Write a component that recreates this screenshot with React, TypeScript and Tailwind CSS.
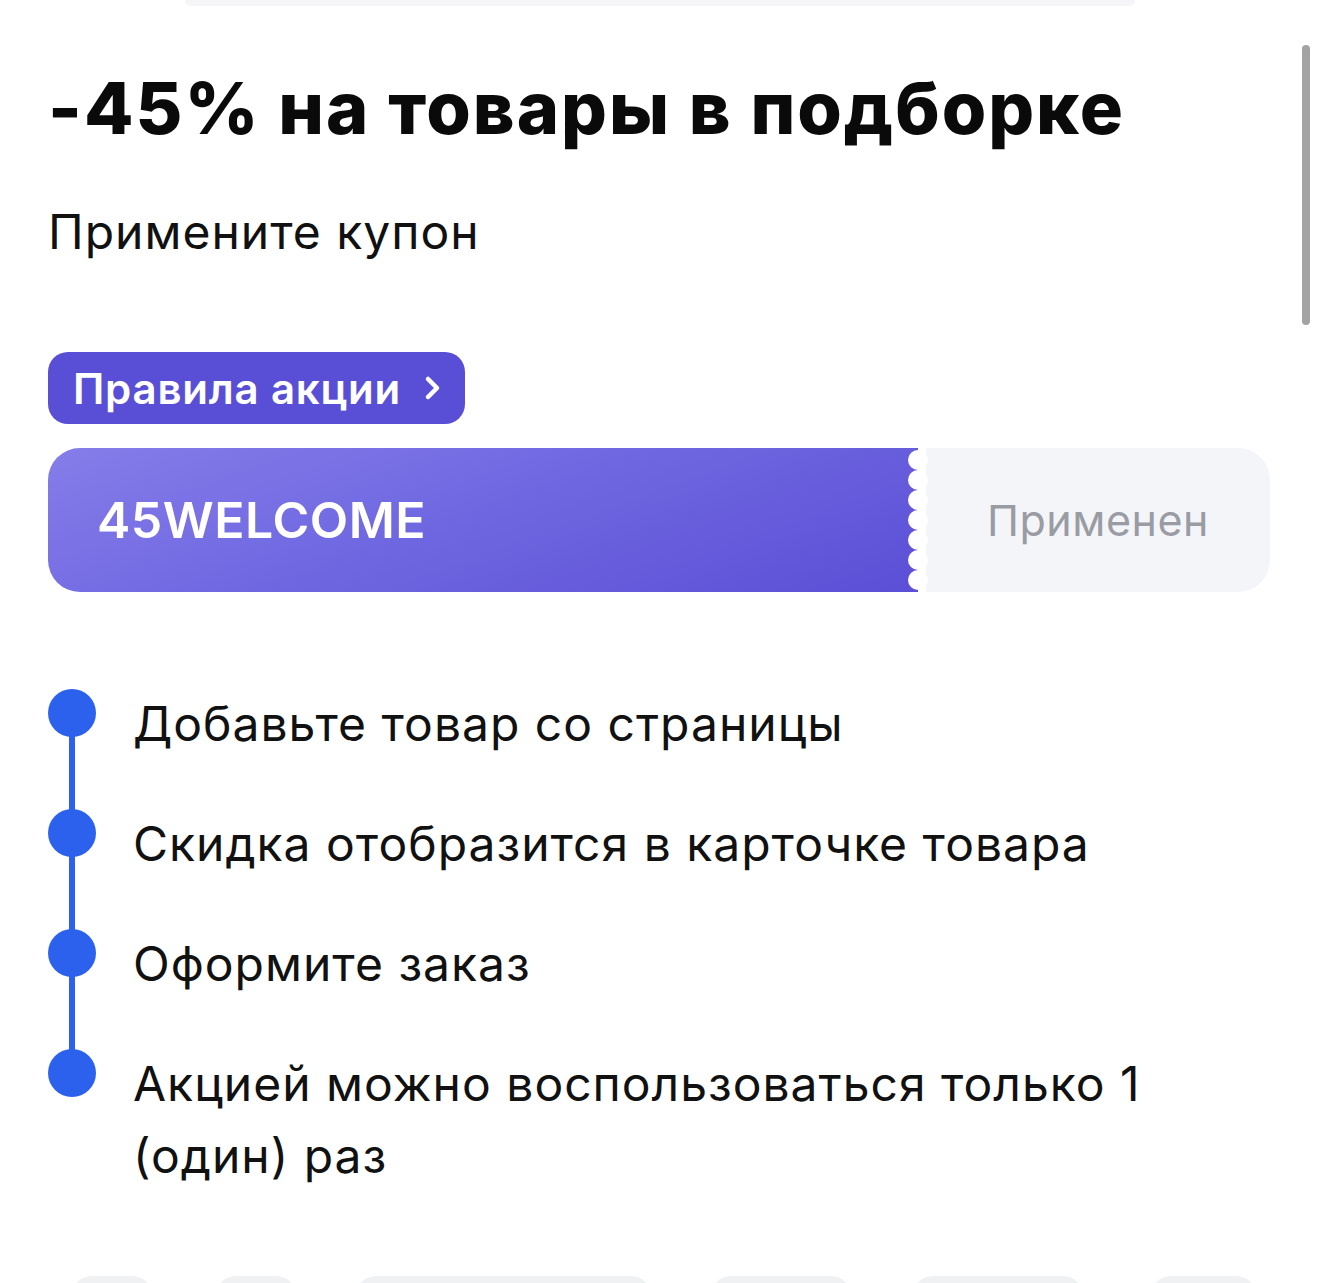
import React from "react"

const steps = [
  "Добавьте товар со страницы",
  "Скидка отобразится в карточке товара",
  "Оформите заказ",
  "Акцией можно воспользоваться только 1 (один) раз",
]

function Chevron() {
  return (
    <svg width="22" height="30" viewBox="0 0 22 30" fill="none">
      <path d="M7 6l9 9-9 9" stroke="white" strokeWidth="4.5" strokeLinecap="round" strokeLinejoin="round" />
    </svg>
  )
}

export default function App() {
  return (
    <div className="relative w-[1320px] h-[1283px] overflow-hidden bg-white font-['Inter',sans-serif] text-[#111]">
      {/* top card edge */}
      <div className="ml-[185px] w-[950px] h-[6px] rounded-b-[20px] bg-[#f5f5f8]" />

      {/* scrollbar */}
      <div className="absolute right-[10px] top-[45px] w-[8px] h-[280px] rounded-full bg-[#a3a3a3]" />

      <div className="px-12">
        <h1 className="mt-[60px] text-[72px] leading-[84px] font-extrabold tracking-[2px] text-[#0a0a0a]">
          -45% на товары в подборке
        </h1>
        <p className="mt-[52px] text-[48px] leading-[60px] tracking-[1px] text-[#111]">Примените купон</p>

        <button className="mt-[90px] h-[72px] pl-[25px] pr-[22px] rounded-[20px] bg-[#594fd6] flex items-center gap-[20px] text-white text-[42px] font-semibold tracking-[0.8px]">
          <span>Правила акции</span>
          <Chevron />
        </button>

        {/* coupon */}
        <div className="mt-[24px] flex h-[144px] w-[1222px]">
          <div className="relative w-[870px] h-full rounded-l-[32px] bg-[linear-gradient(160deg,#857de9_0%,#6e66e0_50%,#5b4fd6_100%)] flex items-center pl-[49px]">
            <span className="text-white text-[50px] font-semibold tracking-[0.5px]">45WELCOME</span>
            <div className="absolute right-[-10px] top-0 h-full flex flex-col justify-around py-[2px]">
              {Array.from({ length: 7 }).map((_, i) => (
                <div key={i} className="w-[20px] h-[20px] rounded-full bg-white" />
              ))}
            </div>
          </div>
          <div className="w-[8px] h-full bg-white" />
          <div className="flex-1 h-full rounded-r-[32px] bg-[#f4f5f9] flex items-center justify-center">
            <span className="text-[43px] text-[#9a9ca3] tracking-[0.5px]">Применен</span>
          </div>
        </div>

        {/* steps */}
        <div className="mt-[97px] relative">
          <div className="absolute left-[21px] top-[24px] w-[6px] h-[360px] bg-[#2b61ec]" />
          <div className="flex flex-col">
            {steps.map((s, i) => (
              <div key={i} className="relative flex items-start gap-[37px] min-h-[120px]">
                <div className="w-[48px] h-[48px] rounded-full bg-[#2b61ec] shrink-0" />
                <p className="text-[48px] leading-[72px] mt-[-1px] max-w-[1030px] tracking-[1px] text-[#111]">{s}</p>
              </div>
            ))}
          </div>
        </div>
      </div>

      {/* bottom row shapes */}
      <div className="absolute left-0 top-[1276px] flex w-full">
        <div className="ml-[72px] w-[80px] h-[40px] rounded-full bg-[#f0f1f3]" />
        <div className="ml-[64px] w-[80px] h-[40px] rounded-full bg-[#f0f1f3]" />
        <div className="ml-[60px] w-[295px] h-[40px] rounded-[20px] bg-[#f0f1f3]" />
        <div className="ml-[60px] w-[140px] h-[40px] rounded-[20px] bg-[#f0f1f3]" />
        <div className="ml-[62px] w-[170px] h-[40px] rounded-[20px] bg-[#f0f1f3]" />
        <div className="ml-[68px] w-[105px] h-[40px] rounded-[20px] bg-[#f0f1f3]" />
      </div>
    </div>
  )
}
